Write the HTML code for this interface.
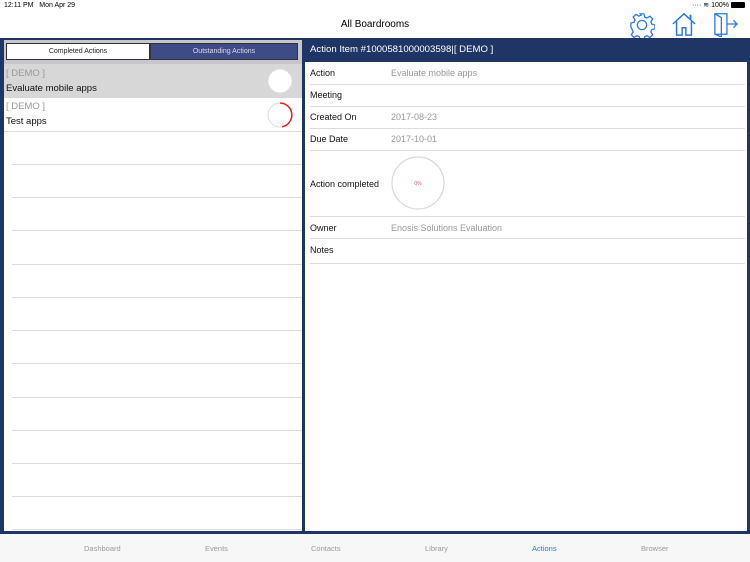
<!DOCTYPE html>
<html><head><style>
*{margin:0;padding:0;box-sizing:border-box}
body{width:750px;height:562px;position:relative;overflow:hidden;background:#fff;font-family:"Liberation Sans",sans-serif;}
.a{position:absolute}
.sep{position:absolute;height:1px;background:#dcdcdc}
.lbl{position:absolute;left:310px;font-size:9px;color:#111}
.val{position:absolute;left:391px;font-size:9px;color:#999}
.tab{position:absolute;top:544px;font-size:7.5px;color:#9a9a9a}
</style></head><body>
<div class="a" style="left:4px;top:2px;font-size:7px;color:#000">12:11 PM&nbsp;&nbsp; Mon Apr 29</div>
<div class="a" style="left:692px;top:1px;font-size:7px;color:#000">···· ≋ 100% <span style="display:inline-block;width:14px;height:6px;background:#000;border-radius:1px;vertical-align:middle"></span></div>
<div class="a" style="left:0;width:750px;top:19px;text-align:center;font-size:10px;color:#000">All Boardrooms</div>
<svg class="a" style="left:629px;top:12px" width="26" height="26" viewBox="0 0 28 28" fill="none" stroke="#2a7ae2" stroke-width="1.4"><path d="M12 2h4l1 3.5 2.5 1 3-2 3 3-2 3 1 2.5 3.5 1v4l-3.5 1-1 2.5 2 3-3 3-3-2-2.5 1-1 3.5h-4l-1-3.5-2.5-1-3 2-3-3 2-3-1-2.5L2 16v-4l3.5-1 1-2.5-2-3 3-3 3 2 2.5-1z"/><circle cx="14" cy="14" r="5"/></svg>
<svg class="a" style="left:671px;top:11px" width="26" height="26" viewBox="0 0 28 28" fill="none" stroke="#2a7ae2" stroke-width="1.6"><path d="M2 14L14 3l12 11M6 11v15h6v-8h4v8h6V11"/><path d="M21 4v5" stroke-width="2"/></svg>
<svg class="a" style="left:712px;top:11px" width="28" height="26" viewBox="0 0 30 28" fill="none" stroke="#2a7ae2" stroke-width="1.4"><path d="M3 3h13v22H3zM3 3l7 4v21l-7-3M16 14h11M23 10l4 4-4 4"/></svg>
<div class="a" style="left:0;top:38px;width:750px;height:496px;background:#1f3566"></div>
<div class="a" style="left:4px;top:40px;width:298px;height:24px;background:#c6c6cc"></div>
<div class="a" style="left:6px;top:43px;width:144px;height:17px;background:#fff;border:1px solid #333;font-size:7px;text-align:center;line-height:15px;color:#222">Completed Actions</div>
<div class="a" style="left:150px;top:43px;width:148px;height:17px;background:#3e4b86;border:1px solid #333;font-size:7px;text-align:center;line-height:15px;color:#dde">Outstanding Actions</div>
<div class="a" style="left:4px;top:64px;width:298px;height:467px;background:#fff"></div>
<div class="a" style="left:4px;top:64px;width:298px;height:34px;background:#d7d7d7"></div>
<div class="a" style="left:6px;top:68px;font-size:9.5px;color:#999">[ DEMO ]</div>
<div class="a" style="left:6px;top:83px;font-size:9.5px;color:#111">Evaluate mobile apps</div>
<div class="a" style="left:6px;top:101px;font-size:9.5px;color:#999">[ DEMO ]</div>
<div class="a" style="left:6px;top:116px;font-size:9.5px;color:#111">Test apps</div>
<svg class="a" style="left:266px;top:68px" width="28" height="60"><circle cx="14" cy="13" r="12" fill="#fff" stroke="#ddd"/><circle cx="14" cy="47" r="12" fill="#fff" stroke="#ddd"/><path d="M14 35a12 12 0 0 1 2 23.8" fill="none" stroke="#e02020" stroke-width="1.5"/></svg>
<div class="sep" style="left:4px;top:131px;width:298px"></div>
<div class="sep" style="left:12px;top:164px;width:290px"></div>
<div class="sep" style="left:12px;top:197px;width:290px"></div>
<div class="sep" style="left:12px;top:230px;width:290px"></div>
<div class="sep" style="left:12px;top:264px;width:290px"></div>
<div class="sep" style="left:12px;top:297px;width:290px"></div>
<div class="sep" style="left:12px;top:330px;width:290px"></div>
<div class="sep" style="left:12px;top:363px;width:290px"></div>
<div class="sep" style="left:12px;top:397px;width:290px"></div>
<div class="sep" style="left:12px;top:430px;width:290px"></div>
<div class="sep" style="left:12px;top:463px;width:290px"></div>
<div class="sep" style="left:12px;top:496px;width:290px"></div>
<div class="sep" style="left:12px;top:529px;width:290px"></div>
<div class="a" style="left:310px;top:44px;font-size:9.6px;color:#fff">Action Item #1000581000003598|[ DEMO ]</div>
<div class="a" style="left:305px;top:62px;width:442px;height:469px;background:#fff"></div>
<div class="lbl" style="top:68px">Action</div><div class="val" style="top:68px">Evaluate mobile apps</div>
<div class="sep" style="left:310px;top:84px;width:435px"></div>
<div class="lbl" style="top:90px">Meeting</div>
<div class="sep" style="left:310px;top:106px;width:435px"></div>
<div class="lbl" style="top:112px">Created On</div><div class="val" style="top:112px">2017-08-23</div>
<div class="sep" style="left:310px;top:128px;width:435px"></div>
<div class="lbl" style="top:134px">Due Date</div><div class="val" style="top:134px">2017-10-01</div>
<div class="sep" style="left:310px;top:150px;width:435px"></div>
<div class="lbl" style="top:179px">Action completed</div>
<svg class="a" style="left:391px;top:156px" width="56" height="56"><circle cx="27" cy="27" r="26" fill="#fff" stroke="#d8d8d8" stroke-width="1.2"/><text x="27" y="29" font-size="5" fill="#e05070" text-anchor="middle" font-family="Liberation Sans">0%</text></svg>
<div class="sep" style="left:310px;top:216px;width:435px"></div>
<div class="lbl" style="top:223px">Owner</div><div class="val" style="top:223px">Enosis Solutions Evaluation</div>
<div class="sep" style="left:310px;top:238px;width:435px"></div>
<div class="lbl" style="top:245px">Notes</div>
<div class="sep" style="left:310px;top:263px;width:435px"></div>
<div class="a" style="left:0;top:534px;width:750px;height:28px;background:#f7f7f7"></div>
<div class="tab" style="left:84px">Dashboard</div>
<div class="tab" style="left:205px">Events</div>
<div class="tab" style="left:311px">Contacts</div>
<div class="tab" style="left:425px">Library</div>
<div class="tab" style="left:532px;color:#2a7ae2">Actions</div>
<div class="tab" style="left:641px">Browser</div>
</body></html>
